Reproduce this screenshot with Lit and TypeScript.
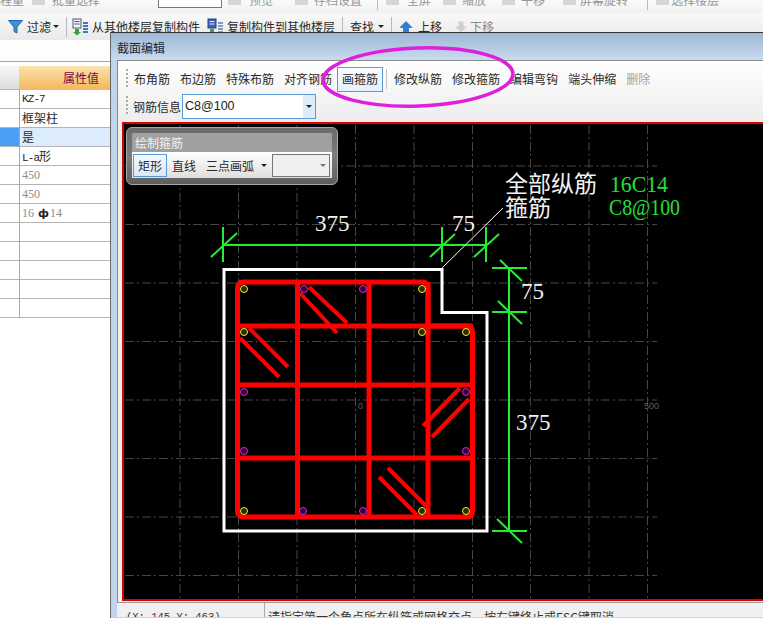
import { LitElement, html, css, svg } from "lit";
import { customElement } from "lit/decorators.js";

const VX = [180, 238.5, 297, 355.5, 414, 472.5, 530.5, 589, 647.5];
const HY = [166, 224.5, 283, 341.5, 400, 458.5, 517, 575.5];
const DOTS: [number, number, string][] = [
  [244, 289, "y"], [304, 289, "m"], [363, 289, "m"], [422, 289, "y"],
  [244, 332, "y"], [422, 332, "y"], [466, 332, "y"],
  [244, 392, "m"], [466, 392, "m"], [244, 451, "m"], [466, 451, "m"],
  [244, 511, "y"], [303, 511, "m"], [363, 511, "m"], [422, 511, "y"], [466, 511, "y"],
];
const HOOKS = [
  [300, 293, 337, 333], [309, 287, 347, 323],
  [240, 338, 279, 377], [249, 328, 288, 367],
  [460, 388, 423, 426], [469, 399, 432, 437],
  [379, 477, 417, 515], [388, 468, 426, 506],
];
const GREEN = [
  [223, 245, 487, 245], [223, 227, 223, 262], [211, 257, 237, 233],
  [442, 227, 442, 262], [430, 257, 455, 234], [486, 227, 486, 262], [474, 257, 499, 234],
  [509, 268, 509, 531], [492, 268, 527, 268], [500, 260, 522, 281],
  [492, 312, 527, 312], [498, 301, 522, 324], [492, 531, 527, 531], [497, 519, 522, 543],
];
const RED = [
  [297.5, 282, 297.5, 517], [369, 282, 369, 517], [428, 282, 428, 517],
  [237.5, 326, 472.5, 326], [237.5, 385, 472.5, 385], [237.5, 458, 472.5, 458],
];

function line(a: number[]) {
  return svg`<line x1=${a[0]} y1=${a[1]} x2=${a[2]} y2=${a[3]}></line>`;
}

@customElement("app-root")
export class AppRoot extends LitElement {
  static styles = css`
    :host {
      display: block;
      width: 763px;
      height: 618px;
      position: relative;
      overflow: hidden;
      background: #fff;
      font-family: "Noto Sans CJK SC", "Liberation Sans", sans-serif;
      font-size: 12px;
      color: #2a2a2a;
    }
    .top { height: 13px; overflow: hidden; background: linear-gradient(#fafafa, #f1f1f1); }
    .top-in { display: flex; align-items: center; height: 18px; margin-top: -10px; color: #969696; white-space: nowrap; }
    .combo-top { width: 62px; height: 15px; border: 1px solid #777; background: #fff; }
    .sq { width: 13px; height: 12px; background: #d6d6d6; }
    .vbar { width: 1px; height: 22px; background: #bbb; }
    .bar { height: 27px; display: flex; align-items: center; background: linear-gradient(#f9f9f9, #e9e9e9); white-space: nowrap; }
    .bar .sep { width: 1px; height: 20px; background: #b8b8b8; }
    .caret { width: 0; height: 0; border: 3px solid transparent; border-top: 3px solid #222; border-bottom: 0; }
    .dim { color: #8a8a8a; }
    .gap { height: 21px; border-bottom: 1px solid #a8a8a8; background: #fdfdfd; }
    .table { display: grid; grid-template-columns: 19px 91px; margin-top: 4px; width: 110px; }
    .hd0 { height: 24px; background: linear-gradient(#f7f7f7, #dcdcdc); border-bottom: 1px solid #b4b4b4; box-sizing: border-box; }
    .hd1 { height: 24px; background: linear-gradient(#fbe3ae, #f4b75c); box-sizing: border-box; text-align: right; padding-right: 11px; color: #7a0c3e; font-size: 12px; line-height: 24px; }
    .c0, .c1 { height: 19px; box-sizing: border-box; border-bottom: 1px solid #b4b4b4; line-height: 18px; white-space: nowrap; overflow: hidden; }
    .c1 { border-left: 1px solid #a8a8a8; padding-left: 2px; }
    .sel0 { background: #4a9ff5; }
    .sel1 { background: #ddecfc; }
    .mono { font-family: "Liberation Mono", monospace; font-size: 11px; letter-spacing: -0.9px; color: #222; }
    .num { font-family: "Liberation Serif", serif; font-size: 12px; color: #8c8c8c; }
    .sym { color: #222; font-weight: 700; font-size: 11px; font-family: "DejaVu Sans", sans-serif; margin: 0 1px; }

    .dialog {
      position: absolute; left: 110px; top: 32px; width: 653px; height: 586px;
      box-sizing: border-box; border-top: 1px solid #333; border-left: 1px solid #666;
      background: #c1d5ea; display: flex; flex-direction: column;
    }
    .title {
      height: 27px; flex: none; box-sizing: border-box; padding-left: 6px; line-height: 29px;
      background: linear-gradient(#9db7d5, #c9dbee); color: #1c2733;
    }
    .body {
      margin-left: 6px; height: 543px; flex: none; box-sizing: border-box;
      border-top: 1px solid #8a8a8a; border-left: 1px solid #8a8a8a; border-bottom: 1px solid #9a9a9a;
      background: linear-gradient(#fff, #ededed 60px, #efefef);
      display: flex; flex-direction: column;
    }
    .tb1 { height: 32px; flex: none; box-sizing: border-box; padding: 6px 0 0 8px; display: flex; align-items: flex-start; white-space: nowrap; }
    .tb2 { height: 29px; flex: none; box-sizing: border-box; padding: 1px 0 0 8px; display: flex; align-items: flex-start; white-space: nowrap; }
    .grip { width: 2px; height: 20px; margin: 2px 1px 0 0; background: repeating-linear-gradient(#aaa 0 2px, transparent 2px 4px); flex: none; }
    .it { padding: 0 5px; line-height: 23px; height: 23px; }
    .it.on { padding: 0 4px; height: 23px; line-height: 21px; border: 1px solid #5b9bd5; background: linear-gradient(#fafdff, #e4f0fb); }
    .it.off { color: #a2a2a2; }
    .tsep { width: 1px; height: 20px; background: #c2c2c2; margin: 2px 2px 0 3px; flex: none; }
    .lbl { margin-left: 4px; line-height: 25px; }
    .combo { width: 134px; height: 25px; margin-left: 1px; box-sizing: border-box; border: 1px solid #5b9bd5; background: #fff; display: flex; align-items: stretch; }
    .combo span { flex: 1; padding-left: 2px; line-height: 22px; font-family: "Liberation Sans", sans-serif; font-size: 12.5px; color: #222; }
    .combo i { width: 12px; background: #deebf8; display: flex; align-items: center; justify-content: center; }

    .canvas {
      margin-left: 4px; height: 479px; flex: none; box-sizing: border-box; position: relative;
      border: solid #e00000; border-width: 2px 0 2px 2px; background: #000;
    }
    .canvas svg { display: block; }
    .panel {
      position: absolute; left: 2px; top: 3px; width: 212px; height: 58px; box-sizing: border-box;
      padding: 5px; border: 1px solid #a8a8a8; border-radius: 6px;
      background: linear-gradient(#6a6a6a, #7c7c7c 50%, #5e5e5e);
    }
    .ptitle { height: 19px; background: #a0a0a0; color: #f2f2f2; line-height: 19px; padding-left: 3px; }
    .pbar { height: 26px; box-sizing: border-box; padding: 2px 0 0 1px; display: flex; align-items: flex-start; background: linear-gradient(#fff, #dedede); white-space: nowrap; }
    .pon { height: 23px; box-sizing: border-box; line-height: 21px; padding: 0 4px; border: 1px solid #5b9bd5; background: linear-gradient(#f4f9ff, #d9e8f8); }
    .pit { line-height: 23px; }
    .pcombo { width: 58px; height: 23px; box-sizing: border-box; border: 1px solid #777; background: #f0f0f0; display: flex; align-items: center; justify-content: flex-end; padding-right: 3px; margin-left: 5px; }
    .pcombo .caret { border-top-color: #777; }

    .status { height: 14px; flex: none; display: flex; overflow: hidden; background: #f0f0f0; white-space: nowrap; margin-left: 6px; padding-top: 0; }
    .status div { padding-top: 7px; line-height: 14px; color: #333; }
    .coord { width: 148px; box-sizing: border-box; padding-left: 9px; border-right: 1px solid #aaa; font-family: "Liberation Mono", monospace; font-size: 10.5px; }
    .msg { padding-left: 3px; }

    .ring { position: absolute; left: 315px; top: 38px; }
  `;

  private canvasSvg() {
    return html`<svg width="639" height="475" viewBox="124 124 639 475" xmlns="http://www.w3.org/2000/svg">
      <g stroke="#464646" stroke-width="1" stroke-dasharray="9 3 2 3" fill="none">
        ${VX.map((x) => svg`<line x1=${x} y1="125" x2=${x} y2="599"></line>`)}
        ${HY.map((y) => svg`<line x1="125" y1=${y} x2="657" y2=${y}></line>`)}
      </g>
      <g font-family="Liberation Sans, sans-serif" font-size="9" fill="#5f5f5f">
        <text x="358" y="409">0</text>
        <text x="644" y="409">500</text>
      </g>
      <path d="M224 269.5H442V312.5H487V531H224Z" fill="none" stroke="#fff" stroke-width="3"></path>
      <g stroke="#ff0000" fill="none">
        <path d="M243.5 282H422Q428 282 428 288V326H466.5Q472.5 326 472.5 332V511Q472.5 517 466.5 517H243.5Q237.5 517 237.5 511V288Q237.5 282 243.5 282Z" stroke-width="5"></path>
        <g stroke-width="5">${RED.map(line)}</g>
        <g stroke-width="4">${HOOKS.map(line)}</g>
      </g>
      ${DOTS.map(([x, y, k]) => svg`<circle cx=${x} cy=${y} r="3.5" fill=${k === "y" ? "#2a2a00" : "#3a003a"} stroke=${k === "y" ? "#f2f22a" : "#d22ad2"} stroke-width="1"></circle>`)}
      <g stroke="#22ee33" stroke-width="2" fill="none">${GREEN.map(line)}</g>
      <line x1="442" y1="268" x2="503" y2="208" stroke="#fff" stroke-width="1"></line>
      <g font-family="Liberation Serif, serif" font-size="23" fill="#f2f2f2">
        <text x="315" y="231">375</text>
        <text x="452" y="231">75</text>
        <text x="521" y="299">75</text>
        <text x="516" y="430">375</text>
      </g>
      <g font-family="Noto Sans CJK SC, sans-serif" font-size="23" fill="#f2f2f2">
        <text x="505" y="192">全部纵筋</text>
        <text x="505" y="216">箍筋</text>
      </g>
      <g font-family="Liberation Serif, serif" font-size="23" fill="#22e03a">
        <text x="610" y="192" textLength="58" lengthAdjust="spacingAndGlyphs">16C14</text>
        <text x="609" y="215" textLength="71" lengthAdjust="spacingAndGlyphs">C8@100</text>
      </g>
    </svg>`;
  }

  render() {
    return html`
      <div class="top"><div class="top-in">
        <span>程量</span><span class="sq" style="margin-left:8px"></span><span style="margin-left:7px">批量选择</span>
        <span class="combo-top" style="margin-left:58px"></span>
        <span class="sq" style="margin-left:6px"></span><span style="margin-left:8px">预览</span>
        <span class="sq" style="margin-left:22px"></span><span style="margin-left:6px">存档设置</span>
        <span class="vbar" style="margin-left:15px"></span>
        <span class="sq" style="margin-left:8px"></span><span style="margin-left:8px">全屏</span>
        <span class="sq" style="margin-left:12px"></span><span style="margin-left:6px">缩放</span>
        <span class="sq" style="margin-left:16px"></span><span style="margin-left:6px">平移</span>
        <span class="sq" style="margin-left:18px"></span><span style="margin-left:4px">屏幕旋转</span>
        <span class="vbar" style="margin-left:19px"></span>
        <span class="sq" style="margin-left:8px"></span><span style="margin-left:2px">选择楼层</span>
      </div></div>

      <div class="bar">
        <svg style="margin-left:8px" width="15" height="14" viewBox="0 0 15 14"><path d="M0.5 0.5H14.5L9 7V13L6 11.5V7Z" fill="#3f8fd8" stroke="#1f68b0" stroke-width="1"></path></svg>
        <span style="margin-left:4px">过滤</span>
        <span class="caret" style="margin-left:2px"></span>
        <span class="sep" style="margin-left:7px"></span>
        <svg style="margin-left:5px" width="17" height="18" viewBox="0 0 17 18"><rect x="1" y="1" width="8" height="9" fill="#eef2f8" stroke="#4a5a78"></rect><path d="M2.5 3.5H7.5M2.5 6H7.5" stroke="#4a5a78"></path><path d="M3 11H7V14H9L5 17.5L1 14H3Z" fill="#39a040"></path><path d="M11 5H16M11 8H16M11 11H16M11 14H16" stroke="#3b78c4" stroke-width="2"></path></svg>
        <span style="margin-left:3px">从其他楼层复制构件</span>
        <svg style="margin-left:7px" width="17" height="18" viewBox="0 0 17 18"><rect x="1" y="1" width="8" height="9" fill="#3c62b8" stroke="#26407e"></rect><path d="M2.5 3.5H7.5M2.5 6H7.5" stroke="#dfe7f6"></path><path d="M3 11H7V14H9L5 17.5L1 14H3Z" fill="#39a040"></path><path d="M11 5H16M11 8H16M11 11H16M11 14H16" stroke="#7f9cc4" stroke-width="2"></path></svg>
        <span style="margin-left:3px">复制构件到其他楼层</span>
        <span class="sep" style="margin-left:7px"></span>
        <span style="margin-left:7px">查找</span>
        <span class="caret" style="margin-left:4px"></span>
        <span class="sep" style="margin-left:7px"></span>
        <svg style="margin-left:7px" width="14" height="12" viewBox="0 0 14 12"><path d="M7 0.5L13 6.5H9.5V11.5H4.5V6.5H1Z" fill="#2f7fd8" stroke="#1c5ca8" stroke-width="0.6"></path></svg>
        <span style="margin-left:5px">上移</span>
        <svg style="margin-left:12px" width="14" height="12" viewBox="0 0 14 12"><path d="M7 11.5L13 5.5H9.5V0.5H4.5V5.5H1Z" fill="#cfcfcf"></path></svg>
        <span class="dim" style="margin-left:2px">下移</span>
      </div>
      <div class="gap"></div>

      <div class="table">
        <div class="hd0"></div><div class="hd1">属性值</div>
        <div class="c0"></div><div class="c1 mono">KZ-7</div>
        <div class="c0"></div><div class="c1">框架柱</div>
        <div class="c0 sel0"></div><div class="c1 sel1">是</div>
        <div class="c0"></div><div class="c1"><span class="mono">L-a</span>形</div>
        <div class="c0"></div><div class="c1 num">450</div>
        <div class="c0"></div><div class="c1 num">450</div>
        <div class="c0"></div><div class="c1 num">16 <span class="sym">ф</span>14</div>
        <div class="c0"></div><div class="c1"></div>
        <div class="c0"></div><div class="c1"></div>
        <div class="c0"></div><div class="c1"></div>
        <div class="c0"></div><div class="c1"></div>
        <div class="c0"></div><div class="c1"></div>
      </div>

      <div class="dialog">
        <div class="title">截面编辑</div>
        <div class="body">
          <div class="tb1">
            <span class="grip"></span>
            <span class="it">布角筋</span><span class="it">布边筋</span><span class="it">特殊布筋</span><span class="it">对齐钢筋</span>
            <span class="it on">画箍筋</span>
            <span class="tsep"></span>
            <span class="it">修改纵筋</span><span class="it">修改箍筋</span><span class="it">编辑弯钩</span><span class="it">端头伸缩</span><span class="it off">删除</span>
          </div>
          <div class="tb2">
            <span class="grip"></span>
            <span class="lbl">钢筋信息</span>
            <div class="combo"><span>C8@100</span><i><b class="caret"></b></i></div>
          </div>
          <div class="canvas">
            ${this.canvasSvg()}
            <div class="panel">
              <div class="ptitle">绘制箍筋</div>
              <div class="pbar">
                <span class="pon">矩形</span>
                <span class="pit" style="margin-left:5px">直线</span>
                <span class="pit" style="margin-left:10px">三点画弧</span>
                <span class="caret" style="margin:10px 0 0 7px"></span>
                <span class="pcombo"><span class="caret"></span></span>
              </div>
            </div>
          </div>
        </div>
        <div class="status">
          <div class="coord">(X: 145 Y: 463)</div>
          <div class="msg">请指定第一个角点所在纵筋或网格交点，按右键终止或ESC键取消</div>
        </div>
      </div>

      <svg class="ring" width="210" height="80" viewBox="315 38 210 80">
        <ellipse cx="418" cy="77" rx="95" ry="29" fill="none" stroke="#e01fdc" stroke-width="3.5" transform="rotate(-2 418 77)"></ellipse>
      </svg>
    `;
  }
}
